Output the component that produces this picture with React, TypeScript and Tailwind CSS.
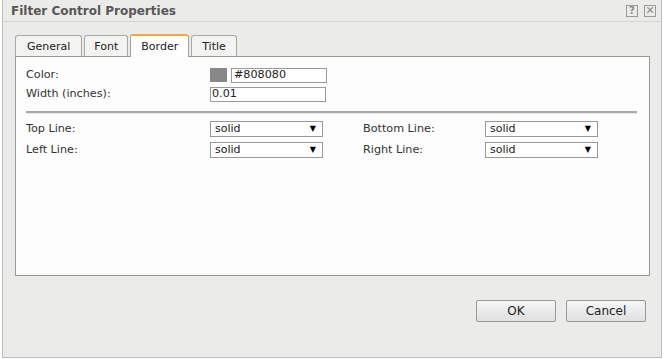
import React from "react";

const font = { fontFamily: '"DejaVu Sans", Verdana, sans-serif' };

const tabs = [
  { label: "General", pad: "px-[11px]" },
  { label: "Font", pad: "px-[9px]" },
  { label: "Border", pad: "px-[10px]" },
  { label: "Title", pad: "px-[10px]" },
];

const Select: React.FC<{ value: string }> = ({ value }) => (
  <div className="flex h-[16px] w-[113px] items-center justify-between border border-[#999] bg-white pl-[4px] pr-[6px] text-[11px] text-[#222]">
    <span>{value}</span>
    <span className="text-[8px] leading-none text-black">▼</span>
  </div>
);

export default function App() {
  return (
    <div className="h-[359px] w-[664px] bg-white text-[11.2px] text-[#333]" style={font}>
      <div className="ml-[2px] flex h-[358px] w-[660px] flex-col border-x border-b border-[#bdbdbd] bg-[#ebebe9]">
        <div className="flex h-[22px] items-center justify-between border-b border-[#d6d6d4] pl-[8px] pr-[5px]">
          <span className="text-[12px] font-bold text-[#575757]">Filter Control Properties</span>
          <div className="flex gap-[6px]">
            <span className="flex h-[12px] w-[12px] items-center justify-center border border-[#9a9a9a] text-[10px] font-bold leading-none text-[#8a8a8a]">?</span>
            <span className="flex h-[12px] w-[12px] items-center justify-center border border-[#9a9a9a] text-[11px] leading-none text-[#8a8a8a]">✕</span>
          </div>
        </div>

        <div className="flex flex-col pl-[12px] pr-[10px] pt-[12px]">
          <div className="flex items-end gap-[2px] text-[11px]">
            {tabs.map((t) =>
              t.label === "Border" ? (
                <div
                  key={t.label}
                  className={`relative -mb-px flex h-[23px] items-center rounded-t-[3px] border border-b-0 border-t-2 border-[#a0a0a0] border-t-[#f2a93b] bg-white pt-[1px] text-[#222] ${t.pad}`}
                >
                  {t.label}
                </div>
              ) : (
                <div
                  key={t.label}
                  className={`flex h-[21px] items-center rounded-t-[3px] border border-b-0 border-[#a8a8a8] bg-[#f3f3f1] pt-[2px] text-[#222] ${t.pad}`}
                >
                  {t.label}
                </div>
              )
            )}
          </div>

          <div className="h-[220px] w-[635px] border border-[#999] bg-[#fcfdfc] px-[10px] pt-[10px]">
            <div className="flex h-[16px] items-center">
              <span className="w-[184px]">Color:</span>
              <span className="h-[14px] w-[17px] bg-[#888888]" />
              <span className="ml-[4px] flex h-[15px] w-[96px] items-center border border-[#999] bg-white pl-[2px] text-[#222]">#808080</span>
            </div>
            <div className="mt-[3px] flex h-[16px] items-center">
              <span className="w-[184px]">Width (inches):</span>
              <span className="flex h-[15px] w-[116px] items-center border border-[#999] bg-white pl-[1px] text-[#222]">0.01</span>
            </div>
            <div className="mr-[2px] mt-[9px] border-t-2 border-[#a8a8a8] border-b border-b-[#e8e8e8]" />
            <div className="mt-[7px] grid grid-cols-[184px_153px_122px_auto] gap-y-[4px]">
              <span className="flex items-center">Top Line:</span>
              <Select value="solid" />
              <span className="flex items-center">Bottom Line:</span>
              <Select value="solid" />
              <span className="flex items-center">Left Line:</span>
              <Select value="solid" />
              <span className="flex items-center">Right Line:</span>
              <Select value="solid" />
            </div>
          </div>

          <div className="mt-[24px] flex justify-end gap-[10px] pr-[5px]">
            <button className="h-[22px] w-[80px] rounded-[2px] border border-[#999] bg-gradient-to-b from-[#f6f6f6] to-[#e0e0e0] text-[12px] text-[#222]">OK</button>
            <button className="h-[22px] w-[80px] rounded-[2px] border border-[#999] bg-gradient-to-b from-[#f6f6f6] to-[#e0e0e0] text-[12px] text-[#222]">Cancel</button>
          </div>
        </div>
      </div>
    </div>
  );
}
